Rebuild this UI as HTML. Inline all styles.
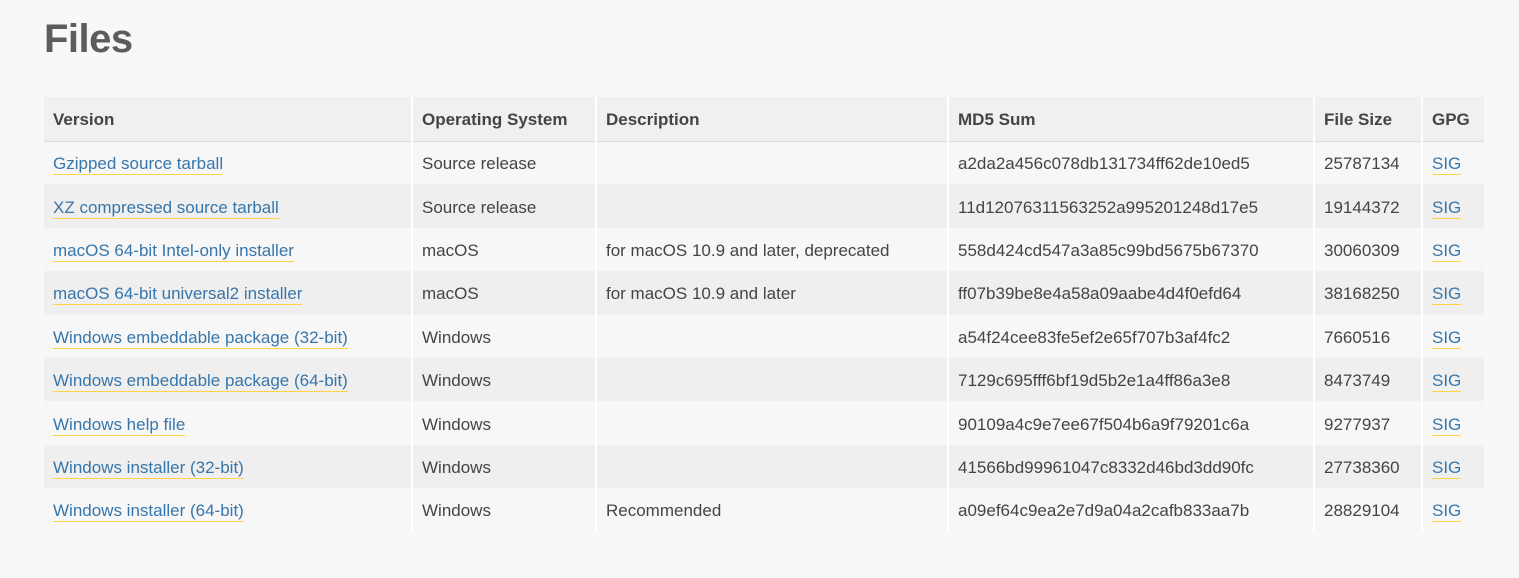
<!DOCTYPE html>
<html><head><meta charset="utf-8"><style>
html,body{margin:0;background:#f8f8f8;width:1519px;height:578px;overflow:hidden}
body{font-family:"Liberation Sans",sans-serif;color:#444}
h1{position:absolute;left:44px;top:17px;margin:0;font-size:40px;font-weight:bold;color:#5c5c5c;letter-spacing:-0.5px}
table{position:absolute;left:44px;top:97px;width:1440px;border-collapse:collapse;font-size:17px;letter-spacing:0}
th{height:44px;text-align:left;font-weight:bold;background:#f0f0f0;color:#444;padding:3px 0 0 9px;border-bottom:1px solid #dedede;box-sizing:border-box}
td{height:43.4px;padding:3px 0 0 9px;box-sizing:border-box;white-space:nowrap}
th+th,td+td{border-left:2px solid #fff}
tr:nth-child(odd) td{background:#f7f7f7}
tr:nth-child(even) td{background:#efefef}
a{color:#3776ab;text-decoration:none;border-bottom:1px solid #ffd343;padding-bottom:1px}
</style></head><body>
<h1>Files</h1>
<table>
<colgroup><col style="width:368px"><col style="width:184px"><col style="width:352px"><col style="width:366px"><col style="width:108px"><col style="width:62px"></colgroup>
<thead><tr><th>Version</th><th>Operating System</th><th>Description</th><th>MD5 Sum</th><th>File Size</th><th>GPG</th></tr></thead>
<tbody>
<tr><td><a>Gzipped source tarball</a></td><td>Source release</td><td></td><td>a2da2a456c078db131734ff62de10ed5</td><td>25787134</td><td><a>SIG</a></td></tr>
<tr><td><a>XZ compressed source tarball</a></td><td>Source release</td><td></td><td>11d12076311563252a995201248d17e5</td><td>19144372</td><td><a>SIG</a></td></tr>
<tr><td><a>macOS 64-bit Intel-only installer</a></td><td>macOS</td><td>for macOS 10.9 and later, deprecated</td><td>558d424cd547a3a85c99bd5675b67370</td><td>30060309</td><td><a>SIG</a></td></tr>
<tr><td><a>macOS 64-bit universal2 installer</a></td><td>macOS</td><td>for macOS 10.9 and later</td><td>ff07b39be8e4a58a09aabe4d4f0efd64</td><td>38168250</td><td><a>SIG</a></td></tr>
<tr><td><a>Windows embeddable package (32-bit)</a></td><td>Windows</td><td></td><td>a54f24cee83fe5ef2e65f707b3af4fc2</td><td>7660516</td><td><a>SIG</a></td></tr>
<tr><td><a>Windows embeddable package (64-bit)</a></td><td>Windows</td><td></td><td>7129c695fff6bf19d5b2e1a4ff86a3e8</td><td>8473749</td><td><a>SIG</a></td></tr>
<tr><td><a>Windows help file</a></td><td>Windows</td><td></td><td>90109a4c9e7ee67f504b6a9f79201c6a</td><td>9277937</td><td><a>SIG</a></td></tr>
<tr><td><a>Windows installer (32-bit)</a></td><td>Windows</td><td></td><td>41566bd99961047c8332d46bd3dd90fc</td><td>27738360</td><td><a>SIG</a></td></tr>
<tr><td><a>Windows installer (64-bit)</a></td><td>Windows</td><td>Recommended</td><td>a09ef64c9ea2e7d9a04a2cafb833aa7b</td><td>28829104</td><td><a>SIG</a></td></tr>
</tbody></table>
</body></html>
